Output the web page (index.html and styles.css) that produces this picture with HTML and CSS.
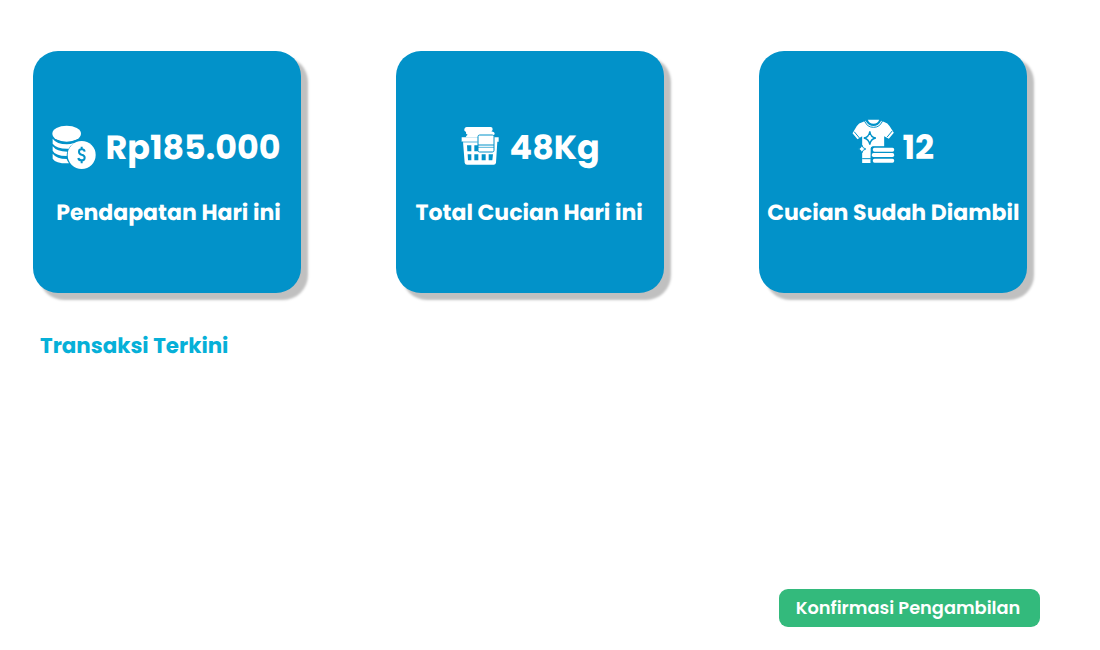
FILE: index.html
```html
<!DOCTYPE html>
<html lang="id">
<head>
<meta charset="utf-8">
<title>Dashboard Laundry</title>
<link rel="stylesheet" href="styles.css">
</head>
<body>
<main class="dashboard">
  <section class="cards">
    <article class="card">
      <div class="stat">
        <svg class="icon icon-coins" viewBox="21 30 132 132" fill="#fff">
          <ellipse cx="65" cy="56" rx="43" ry="24"/>
          <path d="M23 71Q35 88 66 88Q75 88 88 84Q76 91 71 101Q35 102 23 86ZM23 94Q35 110 67 110Q65 115 65 123Q30 122 23 107ZM23 116Q35 132 65 132Q67 138 72 145Q32 146 23 131Z"/>
          <circle cx="110" cy="120" r="42"/>
          <path d="M119 110Q118 103 110 103Q102 103 102 110Q102 117 110 119Q119 121 119 128Q119 136 110 136Q101 136 100 129M110 95V103M110 136V145" fill="none" stroke="#0292c9" stroke-width="6"/>
        </svg>
        <span class="value">Rp185.000</span>
      </div>
      <h2 class="label label-income">Pendapatan Hari ini</h2>
    </article>
    <article class="card">
      <div class="stat">
        <svg class="icon icon-basket" viewBox="20 34 114 117" fill="#fff">
          <path d="M37 37H109Q115 37 115 44Q115 49 111 50Q122 52 121 59L117 62L121 68H34Q36 62 40 60Q33 58 35 52Q28 49 30 43Q32 37 37 37Z"/>
          <path d="M22 68H133V81H129L125 144Q124 150 118 150H38Q32 150 31 144L26 81H22Z"/>
          <path d="M23 82H70" stroke="#0292c9" stroke-width="2"/>
          <path d="M38 92H51V110H39ZM60 92H72V110H60ZM40 119H51V137H41ZM60 119H72V137H60ZM82 119H94V137H82ZM103 119H116L114 137H103Z" fill="#0292c9"/>
          <path d="M76 61H114Q119 61 119 66V107Q119 112 114 112H76Q71 112 71 107V66Q71 61 76 61Z" stroke="#0292c9" stroke-width="3"/>
          <path d="M71 91H119" stroke="#0292c9" stroke-width="3"/>
          <path d="M71 98H119" stroke="#0292c9" stroke-width="2"/>
        </svg>
        <span class="value">48Kg</span>
      </div>
      <h2 class="label label-weight">Total Cucian Hari ini</h2>
    </article>
    <article class="card">
      <div class="stat">
        <svg class="icon icon-shirt" viewBox="20 26 128 132" fill="#fff">
          <path d="M52 35L60 31Q69 47 84 47Q99 47 107 31L116 35Q127 38 132 47L145 67L130 85L116 78V108H82Q74 110 76 119L75 158H50V78L36 87L21 69L34 47Q39 38 52 35Z"/>
          <path d="M67 28H101Q97 40 84 40Q71 40 67 28Z"/>
          <path d="M57 32Q65 51 84 51Q103 51 111 32M26 64L42 83M140 62L125 80M50 145H76" fill="none" stroke="#0292c9" stroke-width="3"/>
          <path d="M73 63Q75 81 91 83Q75 86 73 103Q70 86 55 83Q70 81 73 63Z" stroke="#0292c9" stroke-width="4"/>
          <path d="M49 104Q51 114 61 116Q51 118 49 128Q47 118 38 116Q47 114 49 104Z" stroke="#0292c9" stroke-width="3"/>
          <rect x="76" y="109" width="72" height="50" rx="6" fill="#0292c9"/>
          <rect x="82" y="112" width="64" height="12" rx="5"/>
          <rect x="79" y="128" width="67" height="12" rx="5"/>
          <rect x="82" y="145" width="64" height="12" rx="5"/>
        </svg>
        <span class="value">12</span>
      </div>
      <h2 class="label label-picked">Cucian Sudah Diambil</h2>
    </article>
  </section>
  <h1 class="heading">Transaksi Terkini</h1>
  <footer class="actions">
    <button class="confirm" type="button">Konfirmasi Pengambilan</button>
  </footer>
</main>
</body>
</html>
```
FILE: styles.css
```css
* { box-sizing: border-box; }
body {
  margin: 0;
  background: #fff;
  font-family: Poppins, Inter, sans-serif;
  text-rendering: geometricPrecision;
}
.dashboard {
  display: flex;
  flex-direction: column;
  height: 650px;
  padding: 50.6px 60px 23.4px 33px;
}
.cards {
  display: grid;
  grid-template-columns: repeat(3, 268px);
  column-gap: 95.2px;
}
.card {
  display: flex;
  flex-direction: column;
  align-items: center;
  height: 242.4px;
  padding-top: 66.4px;
  border-radius: 25px;
  background: #0292c9;
  box-shadow: 6.5px 6.5px 2.5px #c0c0c0;
  color: #fff;
}
.stat {
  display: flex;
  align-items: flex-start;
  height: 79px;
}
.icon { display: block; flex: none; }
.icon-coins { width: 44px; height: 44px; margin: 8px 9px 0 -1px; }
.icon-basket { width: 38px; height: 39px; margin: 9px 11px 0 0; }
.icon-shirt { width: 43px; height: 44px; margin: 2px 8px 0 -1px; }
.value {
  padding-top: 10px;
  font-size: 33.4px;
  font-weight: 700;
  line-height: 42px;
  white-space: nowrap;
}
.label {
  margin: 0;
  font-size: 22px;
  font-weight: 700;
  line-height: 34px;
  white-space: nowrap;
}
.label-income { padding-left: 3px; }
.label-weight { padding-right: 2px; }
.heading {
  margin: 37px 0 0 7px;
  color: #06b0d8;
  font-size: 21.4px;
  font-weight: 700;
  line-height: 34px;
}
.actions {
  display: flex;
  justify-content: flex-end;
  margin-top: auto;
}
.confirm {
  width: 261px;
  height: 38px;
  padding: 0 3px 0 0;
  border: 0;
  border-radius: 9px;
  background: #33ba7c;
  color: #fff;
  font: 600 17.8px/38px Poppins, Inter, sans-serif;
}
```
